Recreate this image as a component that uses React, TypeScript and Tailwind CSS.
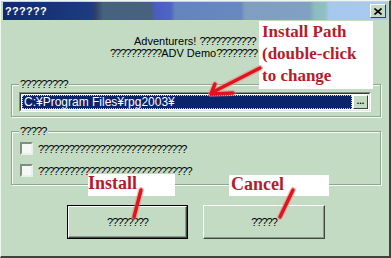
export default function App() {
  return (
    <div className="relative w-[391px] h-[258px] overflow-hidden bg-[#c3dbc3] border-t border-l border-t-[#eef6ee] border-l-[#eef6ee] border-r-2 border-b-2 border-r-[#3c443c] border-b-[#3c443c] font-['Liberation_Sans',Arial,sans-serif] text-[11px] text-black">
      {/* title bar */}
      <div className="ml-[2px] mr-[1px] mt-[1px] h-[18px] flex items-center justify-between bg-[linear-gradient(90deg,#0f2a70_0px,#1d3c80_88px,#2e3e6a_92px,#45627e_100px,#48617e_148px,#4a5cc0_152px,#4f66c2_168px,#6484be_172px,#6888c0_238px,#7f9ec2_242px,#80a0c4_306px,#8cbcc0_312px,#90c0c4_322px,#a6c8ee_326px,#aacaf0_385px)]">
        <span className="pl-[2px] text-white font-bold text-[11px] tracking-[0.3px]">??????</span>
        <div className="mr-[2px] w-[16px] h-[14px] flex items-center justify-center bg-[#c3dbc3] border border-t-white border-l-white border-r-[#404040] border-b-[#404040]">
          <svg width="8" height="7" viewBox="0 0 8 7">
            <path d="M0.5 0.5 L7.5 6.5 M7.5 0.5 L0.5 6.5" stroke="#000" strokeWidth="1.6" />
          </svg>
        </div>
      </div>

      {/* message */}
      <div className="mt-[15px] leading-[12px] text-[11px]">
        <div className="pl-[133px]">
          Adventurers! <span className="tracking-[-1px]">???????????</span>
        </div>
        <div className="pl-[109px]">
          <span className="tracking-[-1px]">??????????</span>ADV Demo<span className="tracking-[-1px]">????????</span>
        </div>
      </div>

      {/* install path group */}
      <div className="relative mt-[25px] ml-[10px] w-[370px] h-[33px] border border-[#8fa58f] shadow-[inset_1px_1px_0_#f4fbf4,1px_1px_0_#f4fbf4] pl-[7px] pt-[7px]">
        <span className="absolute -top-[7px] left-[7px] px-[1px] bg-[#c3dbc3] leading-[12px] tracking-[-0.8px]">?????????</span>
        <div className="flex w-[352px] h-[20px] border border-t-[#7f8f7f] border-l-[#7f8f7f] border-r-white border-b-white">
          <div className="flex flex-1 border border-t-[#303830] border-l-[#303830] border-r-[#dfe9df] border-b-[#dfe9df] bg-white p-[1px]">
            <div className="flex-1 flex items-center bg-[#0a246a] outline-1 outline-dotted outline-[#c8d0f0] -outline-offset-1 pl-[2px] text-white text-[12px] leading-[14px]">
              C:¥Program Files¥rpg2003¥
            </div>
            <div className="w-[15px] ml-[1px] flex items-center justify-center bg-[#c3dbc3] border border-t-white border-l-white border-r-[#404040] border-b-[#404040] font-bold text-[9px] leading-[8px] pb-[3px]">
              ...
            </div>
          </div>
        </div>
      </div>

      {/* options group */}
      <div className="relative mt-[14px] ml-[10px] w-[370px] h-[54px] border border-[#8fa58f] shadow-[inset_1px_1px_0_#f4fbf4,1px_1px_0_#f4fbf4] pl-[8px] pt-[10px] flex flex-col gap-[9px]">
        <span className="absolute -top-[7px] left-[7px] px-[1px] bg-[#c3dbc3] leading-[12px] tracking-[-0.8px]">?????</span>
        <div className="flex items-center gap-[5px] h-[13px]">
          <div className="w-[13px] h-[13px] bg-[#f6f8f6] border-2 border-t-[#7f8f7f] border-l-[#7f8f7f] border-r-[#e8f0e8] border-b-[#e8f0e8]" />
          <span className="leading-[12px] tracking-[-1px]">?????????????????????????????</span>
        </div>
        <div className="flex items-center gap-[5px] h-[13px]">
          <div className="w-[13px] h-[13px] bg-[#f6f8f6] border-2 border-t-[#7f8f7f] border-l-[#7f8f7f] border-r-[#e8f0e8] border-b-[#e8f0e8]" />
          <span className="leading-[12px] tracking-[-1px]">??????????????????????????????</span>
        </div>
      </div>

      {/* buttons */}
      <div className="mt-[20px] ml-[66px] flex gap-[15px]">
        <div className="w-[121px] h-[34px] border border-black">
          <div className="w-full h-full flex items-center justify-center border border-t-white border-l-white border-r-[#404840] border-b-[#404840] shadow-[inset_-1px_-1px_0_#8a9a8a] tracking-[-1px]">
            ????????
          </div>
        </div>
        <div className="w-[122px] h-[34px] flex items-center justify-center border border-t-white border-l-white border-r-[#404840] border-b-[#404840] shadow-[inset_-1px_-1px_0_#8a9a8a] tracking-[-1px]">
          ?????
        </div>
      </div>

      {/* annotations */}
      <div className="absolute left-[258px] top-[20px] w-[114px] h-[68px] bg-white pl-[3px] font-['Liberation_Serif',serif] font-bold text-[17px] leading-[22px] text-[#b41c2c]">
        <div>Install Path</div>
        <div>(double-click</div>
        <div>to change</div>
      </div>
      <div className="absolute left-[87px] top-[173px] w-[87px] h-[22px] bg-white font-['Liberation_Serif',serif] font-bold text-[18px] leading-[18px] text-[#b41c2c]">
        Install
      </div>
      <div className="absolute left-[228px] top-[174px] w-[100px] h-[21px] bg-white pl-[2px] font-['Liberation_Serif',serif] font-bold text-[18px] leading-[18px] text-[#b41c2c]">
        Cancel
      </div>
      <svg className="absolute left-0 top-0 pointer-events-none" width="391" height="258" viewBox="0 0 391 258">
        <g stroke="#f08080" strokeWidth="6" strokeLinecap="round" fill="none" opacity="0.5">
          <path d="M259 67 L212 91" />
          <path d="M210 93 L214 83 M210 93 L232 92" />
          <path d="M140 189 L133 216" />
          <path d="M292 189 L279 216" />
        </g>
        <g stroke="#e0141c" strokeWidth="3.5" strokeLinecap="round" fill="none">
          <path d="M259 67 L212 91" />
          <path d="M210 93 L214 83 M210 93 L232 92" />
          <path d="M140 189 L133 216" />
          <path d="M292 189 L279 216" />
        </g>
      </svg>
    </div>
  );
}
